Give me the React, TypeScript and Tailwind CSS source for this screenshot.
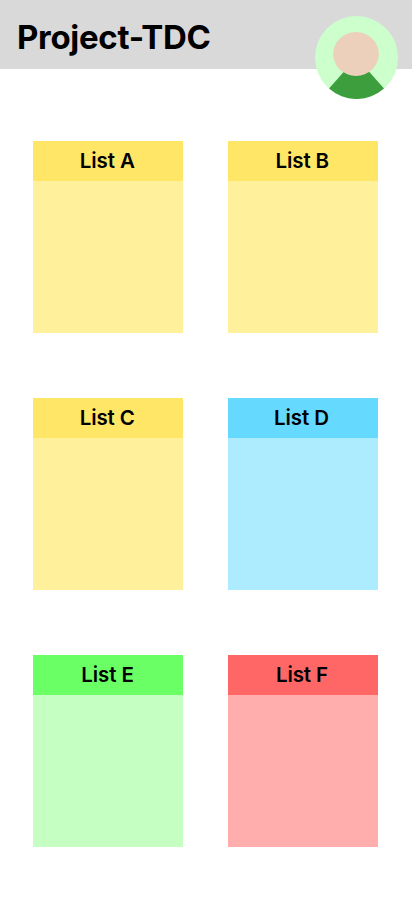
const lists = [
  { name: 'List A', head: 'bg-[#ffe666]', body: 'bg-[#fff09c]', shift: 'pr-[1.5px]' },
  { name: 'List B', head: 'bg-[#ffe666]', body: 'bg-[#fff09c]', shift: 'pr-[1.5px]' },
  { name: 'List C', head: 'bg-[#ffe666]', body: 'bg-[#fff09c]', shift: 'pr-[1.5px]' },
  { name: 'List D', head: 'bg-[#66d9ff]', body: 'bg-[#adebff]', shift: 'pr-[3px]' },
  { name: 'List E', head: 'bg-[#6bff66]', body: 'bg-[#c5ffc2]', shift: 'pr-px' },
  { name: 'List F', head: 'bg-[#ff6666]', body: 'bg-[#ffadad]', shift: 'pr-[2px]' },
];

function Avatar() {
  return (
    <svg className="absolute left-[315px] top-4" width="83" height="83" viewBox="0 0 83 83">
      <circle cx="41.5" cy="41.5" r="41.5" fill="#ccffcc" />
      <path d="M41.5 41.5 L14 72.6 A41.5 41.5 0 0 0 69 72.6 Z" fill="#3d9e3d" />
      <ellipse cx="41" cy="38" rx="22.8" ry="22" fill="#edd0bb" />
    </svg>
  );
}

export default function App() {
  return (
    <div className="relative h-[917px] w-[412px] overflow-hidden bg-white font-['Inter',sans-serif] text-black">
      <header className="h-[69px] bg-[#d9d9d9] pl-[17px] pt-[17px]">
        <h1 className="text-[33px] font-bold leading-[40px] tracking-[-0.3px]">Project-TDC</h1>
      </header>
      <Avatar />
      <main className="grid grid-cols-[150px_150px] gap-x-[45px] gap-y-[65px] pl-[33px] pt-[72px]">
        {lists.map((l) => (
          <section key={l.name} className={`h-48 ${l.body}`}>
            <h2 className={`flex h-10 items-center justify-center text-[20.5px] font-semibold tracking-[-0.1px] ${l.head} ${l.shift}`}>
              {l.name}
            </h2>
          </section>
        ))}
      </main>
    </div>
  );
}
